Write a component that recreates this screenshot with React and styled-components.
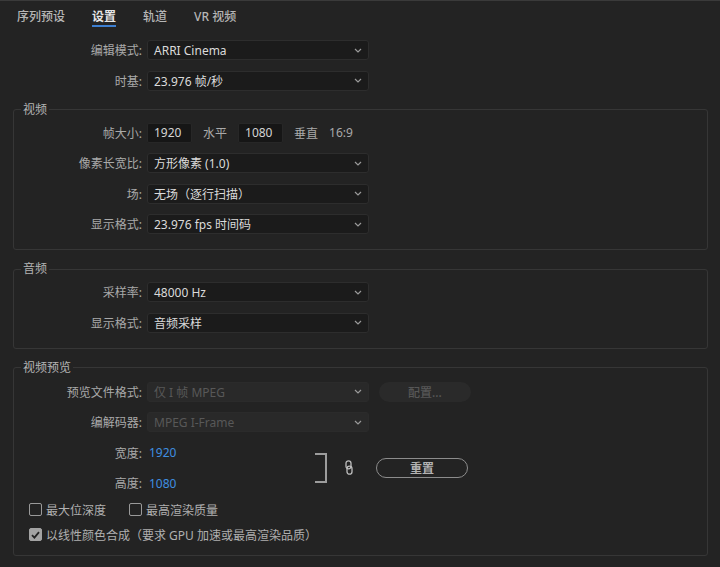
import React from 'react'
import styled, {createGlobalStyle} from 'styled-components'

const GlobalStyle = createGlobalStyle`
  html, body {
    margin: 0;
    background: #232323;
  }
  body {
    font-family: "Noto Sans", "Noto Sans CJK SC", sans-serif;
    font-size: 12px;
    color: #a9a9a9;
  }
`

const Page = styled.div`
  width: 720px;
  height: 567px;
  box-sizing: border-box;
  border-top: 1px solid #3a3a3a;
  padding-top: 8px;
  overflow: hidden;
`

const TabBar = styled.div`
  display: flex;
  gap: 27px;
  padding-left: 17px;
`

const Tab = styled.div`
  line-height: 16px;
  color: ${p => (p.$active ? '#e6e6e6' : '#b6b6b6')};
  font-weight: ${p => (p.$active ? 600 : 500)};
  border-bottom: 2px solid ${p => (p.$active ? '#3d7fd1' : 'transparent')};
`

const Form = styled.div`
  margin-top: 13px;
  padding: 0 12px 0 13px;
  display: flex;
  flex-direction: column;
`

const TopGroup = styled.div`
  padding-left: 8px;
  display: flex;
  flex-direction: column;
  gap: 10.5px;
`

const Section = styled.fieldset`
  margin: ${p => p.$top || 11}px 0 0;
  padding: ${p => p.$pt || 5}px 7px ${p => p.$bottom || 15}px;
  border: 1px solid #363636;
  border-radius: 3px;
  display: flex;
  flex-direction: column;
  gap: 10.5px;
`

const Legend = styled.legend`
  padding: 0 2px;
  line-height: 16px;
  color: #b4b4b4;
`

const Row = styled.div`
  display: flex;
  align-items: center;
  height: 20px;
  gap: ${p => p.$gap || 0}px;
`

const Label = styled.div`
  width: 121px;
  flex: none;
  margin-right: 5px;
  text-align: right;
  color: #a9a9a9;
  white-space: nowrap;
`

const Select = styled.div`
  width: 222px;
  height: 20px;
  box-sizing: border-box;
  display: flex;
  align-items: center;
  justify-content: space-between;
  padding: 0 6px;
  background: ${p => (p.$disabled ? '#292929' : '#1b1b1b')};
  border: 1px solid ${p => (p.$disabled ? '#2b2b2b' : '#2d2d2d')};
  border-radius: 3px;
  color: ${p => (p.$disabled ? '#585858' : '#dadada')};
`

const NumberBox = styled.div`
  width: 45px;
  height: 20px;
  box-sizing: border-box;
  padding-left: 6px;
  display: flex;
  align-items: center;
  background: #161616;
  border: 1px solid #272727;
  border-radius: 2px;
  color: #d4d4d4;
`

const Unit = styled.span`
  color: #a9a9a9;
`

const PillButton = styled.div`
  width: ${p => p.$w}px;
  height: ${p => p.$h}px;
  box-sizing: border-box;
  margin-left: ${p => p.$ml || 0}px;
  display: flex;
  align-items: center;
  justify-content: center;
  border-radius: 12px;
  background: ${p => (p.$outline ? 'transparent' : '#2a2a2a')};
  border: ${p => (p.$outline ? '1.5px solid #8c8c8c' : 'none')};
  color: ${p => (p.$outline ? '#b2b2b2' : '#575757')};
  font-weight: ${p => (p.$outline ? 700 : 500)};
  flex: none;
`

const DimBlock = styled.div`
  display: flex;
  align-items: center;
`

const DimFields = styled.div`
  width: 294px;
  display: flex;
  flex-direction: column;
  gap: 10.5px;
`

const DimValue = styled.span`
  color: #3f8fe0;
  margin-left: 2px;
`

const CheckRow = styled.div`
  display: flex;
  align-items: center;
  height: 20px;
  padding-left: 8px;
  gap: 23px;
`

const CheckItem = styled.label`
  display: flex;
  align-items: center;
  gap: 4px;
  color: #b0b0b0;
`

const Box = styled.span`
  width: 13px;
  height: 13px;
  box-sizing: border-box;
  border-radius: 2px;
  border: 1.5px solid ${p => (p.$checked ? '#a3a3a3' : '#9a9a9a')};
  background: ${p => (p.$checked ? '#a3a3a3' : 'transparent')};
  display: flex;
  align-items: center;
  justify-content: center;
`

const Checks = styled.div`
  display: flex;
  flex-direction: column;
  gap: 5px;
  margin-top: -4px;
`

function Chevron() {
  return (
    <svg width="8" height="5" viewBox="0 0 8 5">
      <path d="M1 1l3 3 3-3" fill="none" stroke="#9a9a9a" strokeWidth="1.2" />
    </svg>
  )
}

function Dropdown({value, disabled}) {
  return (
    <Select $disabled={disabled}>
      <span>{value}</span>
      <Chevron />
    </Select>
  )
}

function Field({label, value, disabled, children}) {
  return (
    <Row>
      <Label>{label}</Label>
      <Dropdown value={value} disabled={disabled} />
      {children}
    </Row>
  )
}

function Checkbox({checked, children}) {
  return (
    <CheckItem>
      <Box $checked={checked}>
        {checked && (
          <svg width="9" height="8" viewBox="0 0 9 8">
            <path d="M1 4.2l2.4 2.4L8 1.2" fill="none" stroke="#232323" strokeWidth="1.8" />
          </svg>
        )}
      </Box>
      {children}
    </CheckItem>
  )
}

export default function App() {
  return (
    <Page>
      <GlobalStyle />
      <TabBar>
        <Tab>序列预设</Tab>
        <Tab $active>设置</Tab>
        <Tab>轨道</Tab>
        <Tab>VR 视频</Tab>
      </TabBar>

      <Form>
        <TopGroup>
          <Field label="编辑模式:" value="ARRI Cinema" />
          <Field label="时基:" value="23.976  帧/秒" />
        </TopGroup>

        <Section>
          <Legend>视频</Legend>
          <Row $gap={11}>
            <Label style={{marginRight: -6}}>帧大小:</Label>
            <NumberBox>1920</NumberBox>
            <Unit>水平</Unit>
            <NumberBox>1080</NumberBox>
            <Unit>垂直</Unit>
            <Unit>16:9</Unit>
          </Row>
          <Field label="像素长宽比:" value="方形像素 (1.0)" />
          <Field label="场:" value="无场（逐行扫描）" />
          <Field label="显示格式:" value="23.976 fps 时间码" />
        </Section>

        <Section>
          <Legend>音频</Legend>
          <Field label="采样率:" value="48000 Hz" />
          <Field label="显示格式:" value="音频采样" />
        </Section>

        <Section $pt={6} $bottom={10}>
          <Legend>视频预览</Legend>
          <Field label="预览文件格式:" value="仅 I 帧 MPEG" disabled>
            <PillButton $w={92} $h={20} $ml={10}>配置...</PillButton>
          </Field>
          <Field label="编解码器:" value="MPEG I-Frame" disabled />
          <DimBlock>
            <DimFields>
              <Row>
                <Label>宽度:</Label>
                <DimValue>1920</DimValue>
              </Row>
              <Row>
                <Label>高度:</Label>
                <DimValue>1080</DimValue>
              </Row>
            </DimFields>
            <svg width="12" height="30" viewBox="0 0 12 30">
              <path d="M0 1H11V29H0" fill="none" stroke="#9c9c9c" strokeWidth="2" />
            </svg>
            <svg width="8" height="15" viewBox="0 0 8 15" style={{marginLeft: 18}}>
              <rect x="1" y="0.8" width="5" height="8" rx="2.5" fill="none" stroke="#bdbdbd" strokeWidth="1.3" />
              <rect x="2" y="6.2" width="5" height="8" rx="2.5" fill="none" stroke="#bdbdbd" strokeWidth="1.3" />
            </svg>
            <PillButton $outline $w={92} $h={20} $ml={23}>重置</PillButton>
          </DimBlock>
          <Checks>
            <CheckRow>
              <Checkbox>最大位深度</Checkbox>
              <Checkbox>最高渲染质量</Checkbox>
            </CheckRow>
            <CheckRow>
              <Checkbox checked>以线性颜色合成（要求 GPU 加速或最高渲染品质）</Checkbox>
            </CheckRow>
          </Checks>
        </Section>
      </Form>
    </Page>
  )
}
